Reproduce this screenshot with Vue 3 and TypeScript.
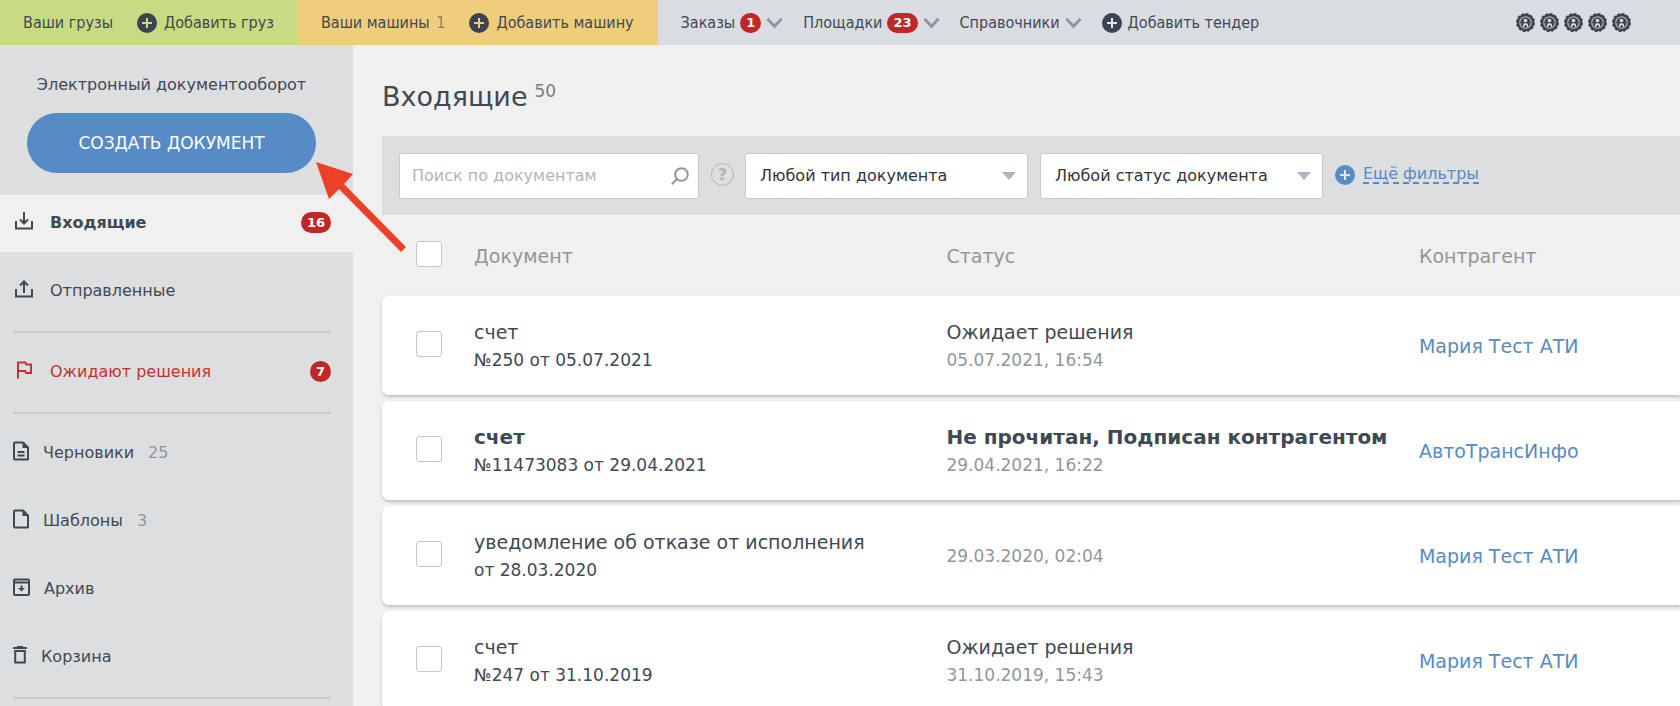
<script setup lang="ts">
import { ref } from 'vue'

interface NavItem {
  label: string
  icon: 'inbox' | 'outbox' | 'flag' | 'draft' | 'template' | 'archive' | 'trash'
  badge?: number
  count?: number
  wide?: boolean
  active?: boolean
  alert?: boolean
}

interface DocRow {
  id: number
  title: string
  details: string
  status?: string
  date: string
  partner: string
  unread?: boolean
}

const navGroups: NavItem[][] = [
  [
    { label: 'Входящие', icon: 'inbox', badge: 16, wide: true, active: true },
    { label: 'Отправленные', icon: 'outbox', wide: true },
  ],
  [{ label: 'Ожидают решения', icon: 'flag', badge: 7, wide: true, alert: true }],
  [
    { label: 'Черновики', icon: 'draft', count: 25 },
    { label: 'Шаблоны', icon: 'template', count: 3 },
    { label: 'Архив', icon: 'archive' },
    { label: 'Корзина', icon: 'trash' },
  ],
]

const menus: { label: string; badge?: number }[] = [
  { label: 'Заказы', badge: 1 },
  { label: 'Площадки', badge: 23 },
  { label: 'Справочники' },
]

const rows: DocRow[] = [
  { id: 1, title: 'счет', details: '№250 от 05.07.2021', status: 'Ожидает решения', date: '05.07.2021, 16:54', partner: 'Мария Тест АТИ' },
  { id: 2, title: 'счет', details: '№11473083 от 29.04.2021', status: 'Не прочитан, Подписан контрагентом', date: '29.04.2021, 16:22', partner: 'АвтоТрансИнфо', unread: true },
  { id: 3, title: 'уведомление об отказе от исполнения', details: 'от 28.03.2020', date: '29.03.2020, 02:04', partner: 'Мария Тест АТИ' },
  { id: 4, title: 'счет', details: '№247 от 31.10.2019', status: 'Ожидает решения', date: '31.10.2019, 15:43', partner: 'Мария Тест АТИ' },
]

const query = ref('')
const selected = ref<number[]>([])

function toggleAll(event: Event) {
  selected.value = (event.target as HTMLInputElement).checked ? rows.map((r) => r.id) : []
}
</script>

<template>
  <div class="page">
    <header class="topbar">
      <nav class="segment cargo">
        <a href="#">Ваши грузы</a>
        <a href="#" class="add">
          <svg class="plus" viewBox="0 0 20 20"><circle cx="10" cy="10" r="10" /><path d="M10 5v10M5 10h10" /></svg>
          Добавить груз
        </a>
      </nav>
      <nav class="segment trucks">
        <a href="#">Ваши машины <span class="muted">1</span></a>
        <a href="#" class="add">
          <svg class="plus" viewBox="0 0 20 20"><circle cx="10" cy="10" r="10" /><path d="M10 5v10M5 10h10" /></svg>
          Добавить машину
        </a>
      </nav>
      <nav class="segment tools">
        <button v-for="menu in menus" :key="menu.label" type="button" class="menu">
          {{ menu.label }}
          <span v-if="menu.badge" class="badge">{{ menu.badge }}</span>
          <svg class="chevron" viewBox="0 0 18 12"><path d="M1.5 1.5 9 9.5 16.5 1.5" /></svg>
        </button>
        <a href="#" class="add">
          <svg class="plus" viewBox="0 0 20 20"><circle cx="10" cy="10" r="10" /><path d="M10 5v10M5 10h10" /></svg>
          Добавить тендер
        </a>
        <div class="medals">
          <svg v-for="n in 5" :key="n" viewBox="0 0 20 20">
            <circle class="teeth" cx="10" cy="10" r="9" />
            <circle class="disc" cx="10" cy="10" r="9.2" />
            <circle class="ring" cx="10" cy="10" r="6" />
            <circle class="face" cx="10" cy="8" r="1.9" />
            <path class="face" d="M7.4 14.8v-2.5q0-1.5 2.6-1.5t2.6 1.5v2.5h-1.4V13H8.8v1.8z" />
          </svg>
        </div>
      </nav>
    </header>

    <div class="body">
      <aside class="sidebar">
        <div class="sidebar-head">
          <div class="product">Электронный документооборот</div>
          <button type="button" class="create">СОЗДАТЬ ДОКУМЕНТ</button>
        </div>
        <nav class="nav">
          <template v-for="(group, g) in navGroups" :key="g">
            <a
              v-for="item in group"
              :key="item.label"
              href="#"
              class="nav-item"
              :class="{ wide: item.wide, active: item.active, alert: item.alert }"
            >
              <svg v-if="item.icon === 'inbox'" class="ico" width="18" height="18" viewBox="0 0 18 18">
                <path d="M1 9v7.5h16V9M9 0v11M5 7.5l4 4 4-4" />
              </svg>
              <svg v-else-if="item.icon === 'outbox'" class="ico" width="18" height="18" viewBox="0 0 18 18">
                <path d="M1 9v7.5h16V9M9 13V2M5 5.5l4-4 4 4" />
              </svg>
              <svg v-else-if="item.icon === 'flag'" class="ico" width="18" height="18" viewBox="0 0 18 18">
                <path d="M3 17.5V1.5h7.5l.7 2H16V12h-5l-.7-2H3" />
              </svg>
              <svg v-else-if="item.icon === 'draft'" class="ico" width="16" height="20" viewBox="0 0 16 20">
                <path d="M2 1.5h8l5 5V18a.5.5 0 0 1-.5.5H2a1 1 0 0 1-1-1v-15a1 1 0 0 1 1-1zM4.500 11h7M4.500 14.500h7" />
                <path class="solid" d="M9.5 1.5V7H15z" />
              </svg>
              <svg v-else-if="item.icon === 'template'" class="ico" width="16" height="20" viewBox="0 0 16 20">
                <path d="M2 1.5h8l5 5V18a.5.5 0 0 1-.5.5H2a1 1 0 0 1-1-1v-15a1 1 0 0 1 1-1z" />
                <path class="solid" d="M9.5 1.5V7H15z" />
              </svg>
              <svg v-else-if="item.icon === 'archive'" class="ico" width="17" height="18" viewBox="0 0 17 18">
                <path d="M1 4.5v-2a1 1 0 0 1 1-1h13a1 1 0 0 1 1 1V16a1 1 0 0 1-1 1H2a1 1 0 0 1-1-1zM1 4.500h15M8.500 7.500V11" />
                <path class="solid" d="M5 10h7l-3.5 3.5z" />
              </svg>
              <svg v-else class="ico" width="14" height="18" viewBox="0 0 14 18">
                <path d="M0 2h14M4 1h6M2.2 5h9.600v11.500H2.200z" />
              </svg>
              <span>{{ item.label }}</span>
              <span v-if="item.count" class="count">{{ item.count }}</span>
              <span v-if="item.badge" class="badge">{{ item.badge }}</span>
            </a>
            <hr class="divider" />
          </template>
        </nav>
      </aside>

      <main class="main">
        <h1 class="title">Входящие <sup>50</sup></h1>

        <form class="filters" @submit.prevent>
          <div class="search">
            <input v-model="query" type="text" placeholder="Поиск по документам" aria-label="Поиск по документам" />
            <button type="submit" aria-label="Найти">
              <svg viewBox="0 0 18 18"><circle cx="10.5" cy="7.5" r="6.3" /><path d="M6 12 .8 17.2" /></svg>
            </button>
          </div>
          <button type="button" class="help" aria-label="Справка">?</button>
          <div class="select">
            <select aria-label="Тип документа">
              <option>Любой тип документа</option>
            </select>
            <svg viewBox="0 0 14 8"><path d="M0 0h14L7 8z" /></svg>
          </div>
          <div class="select">
            <select aria-label="Статус документа">
              <option>Любой статус документа</option>
            </select>
            <svg viewBox="0 0 14 8"><path d="M0 0h14L7 8z" /></svg>
          </div>
          <button type="button" class="more">
            <svg class="plus" viewBox="0 0 20 20"><circle cx="10" cy="10" r="10" /><path d="M10 5v10M5 10h10" /></svg>
            <span>Ещё фильтры</span>
          </button>
        </form>

        <table class="docs">
          <colgroup>
            <col class="c-check" />
            <col class="c-doc" />
            <col class="c-status" />
            <col />
          </colgroup>
          <thead>
            <tr>
              <th class="check"><input type="checkbox" aria-label="Выбрать все" @change="toggleAll" /></th>
              <th>Документ</th>
              <th>Статус</th>
              <th>Контрагент</th>
            </tr>
          </thead>
          <tbody>
            <tr v-for="row in rows" :key="row.id" :class="{ unread: row.unread }">
              <td class="check"><input v-model="selected" type="checkbox" :value="row.id" :aria-label="row.details" /></td>
              <td>
                <div class="primary">{{ row.title }}</div>
                <div class="secondary">{{ row.details }}</div>
              </td>
              <td>
                <div v-if="row.status" class="primary">{{ row.status }}</div>
                <div class="secondary date">{{ row.date }}</div>
              </td>
              <td><a href="#" class="partner">{{ row.partner }}</a></td>
            </tr>
          </tbody>
        </table>
      </main>
    </div>

    <svg class="pointer" viewBox="0 0 90 90"><path d="M0 0 37 12 28 22 90 85 85 90 23 27 13 37z" /></svg>
  </div>
</template>

<style>
body {
  margin: 0;
}
</style>

<style scoped>
.page {
  position: relative;
  display: flex;
  flex-direction: column;
  height: 100vh;
  overflow: hidden;
  background: #f0f0f0;
  color: #3f4954;
  font-family: "DejaVu Sans", Verdana, sans-serif;
  font-size: 16px;
}
a {
  color: inherit;
  text-decoration: none;
}
button {
  padding: 0;
  border: 0;
  background: none;
  color: inherit;
  font: inherit;
  cursor: pointer;
}
svg {
  flex: none;
}

.topbar {
  display: flex;
  flex: none;
  height: 45px;
  font-family: "DejaVu Sans Condensed", "DejaVu Sans", Tahoma, sans-serif;
  white-space: nowrap;
}
.segment {
  display: flex;
  align-items: center;
  gap: 24px;
  padding: 0 24px 0 23px;
}
.cargo {
  background: #c8da82;
}
.trucks {
  background: #efcd7c;
}
.tools {
  flex: 1;
  gap: 20px;
  background: #d9dce1;
}
.muted {
  margin-left: 2px;
  color: #3f495499;
}
.add {
  display: flex;
  align-items: center;
  gap: 6px;
}
.plus {
  width: 20px;
  height: 20px;
}
.plus circle {
  fill: #3b4450;
}
.plus path {
  fill: none;
  stroke: #e4e6ea;
  stroke-width: 2;
}
.cargo .plus path {
  stroke: #c8da82;
}
.trucks .plus path {
  stroke: #efcd7c;
}
.cargo .plus,
.trucks .plus {
  margin-right: 1px;
}
.menu {
  display: flex;
  align-items: center;
  gap: 5px;
}
.chevron {
  width: 17px;
  height: 12px;
  fill: none;
  stroke: #8f979d;
  stroke-width: 3;
}
.badge {
  box-sizing: border-box;
  min-width: 20px;
  padding: 0 6px;
  border-radius: 10px;
  background: #c12728;
  color: #fff;
  font-family: "DejaVu Sans", Verdana, sans-serif;
  font-size: 13px;
  font-weight: bold;
  line-height: 20px;
  text-align: center;
}
.medals {
  display: flex;
  gap: 5px;
  margin: 0 25px 0 auto;
}
.medals svg {
  width: 19px;
  height: 19px;
}
.teeth {
  fill: none;
  stroke: #3b4450;
  stroke-width: 2;
  stroke-dasharray: 2.9 1.81;
}
.disc {
  fill: #3b4450;
}
.ring {
  fill: none;
  stroke: #b9bec5;
  stroke-width: 1.2;
}
.face {
  fill: #d9dce1;
}

.body {
  display: flex;
  flex: 1;
  min-height: 0;
}
.sidebar {
  flex: none;
  width: 353px;
  overflow: hidden;
  background: #dddee0;
}
.sidebar-head {
  padding: 28px 37px 22px 27px;
}
.product {
  margin-bottom: 16px;
  line-height: 24px;
  text-align: center;
}
.create {
  width: 100%;
  height: 60px;
  border-radius: 30px;
  background: #568bc5;
  color: #fff;
  font-size: 17px;
}
.nav {
  display: flex;
  flex-direction: column;
  gap: 11px;
}
.nav-item {
  box-sizing: border-box;
  display: flex;
  align-items: center;
  gap: 14px;
  height: 57px;
  padding: 0 22px 2px 13px;
}
.nav-item.wide {
  gap: 17px;
  padding-left: 15px;
}
.nav-item.active {
  background: #f0f0f0;
  font-weight: bold;
}
.nav-item.alert {
  color: #c9302f;
}
.ico {
  margin-bottom: 3px;
  fill: none;
  stroke: currentColor;
  stroke-width: 2;
}
.ico .solid {
  fill: currentColor;
  stroke: none;
}
.count {
  color: #8f979d;
}
.nav-item .badge {
  margin-left: auto;
  border-radius: 11px;
  line-height: 21px;
}
.divider {
  width: calc(100% - 35px);
  height: 2px;
  margin: 0 22px 0 13px;
  border: 0;
  background: #c9ccd3;
}

.main {
  flex: 1;
  min-width: 0;
  padding: 29px 0 0 29px;
}
.title {
  display: flex;
  gap: 7px;
  margin: 0 0 16px;
  font-size: 27px;
  font-weight: normal;
  line-height: 46px;
}
.title sup {
  color: #76808a;
  font-size: 17px;
  line-height: 34px;
}
.filters {
  display: flex;
  align-items: center;
  height: 79px;
  padding: 0 17px;
  background: #dddee0;
}
.search {
  box-sizing: border-box;
  display: flex;
  align-items: center;
  width: 300px;
  height: 46px;
  padding: 0 9px 0 12px;
  border: 1px solid #c9cacc;
  border-radius: 3px;
  background: #fff;
}
.search input {
  flex: 1;
  min-width: 0;
  padding: 0;
  border: 0;
  outline: 0;
  background: none;
  color: #333;
  font: inherit;
}
.search input::placeholder {
  color: #b4b5b7;
}
.search button,
.search svg {
  display: block;
  width: 18px;
  height: 18px;
}
.search svg {
  fill: none;
  stroke: #8f979d;
  stroke-width: 2;
}
.help {
  box-sizing: border-box;
  width: 23px;
  height: 23px;
  margin: 0 11px 2px 12px;
  border: 1px solid #b1b3b5;
  border-radius: 50%;
  color: #b1b3b5;
  font-size: 16px;
  font-weight: bold;
  line-height: 21px;
}
.select {
  display: grid;
  align-items: center;
  width: 283px;
  margin-right: 12px;
}
.select select {
  grid-area: 1 / 1;
  box-sizing: border-box;
  width: 100%;
  height: 46px;
  padding: 0 30px 0 14px;
  border: 1px solid #c9cacc;
  border-radius: 3px;
  background: #fff;
  color: #333;
  font: inherit;
  appearance: none;
}
.select svg {
  grid-area: 1 / 1;
  justify-self: end;
  width: 14px;
  height: 8px;
  margin-right: 12px;
  fill: #adb6be;
  pointer-events: none;
}
.more {
  display: flex;
  align-items: center;
  gap: 8px;
  margin-bottom: 2px;
  color: #568bc5;
}
.more span {
  border-bottom: 2px dashed #568bc5;
  line-height: 17px;
}
.more .plus circle {
  fill: #568bc5;
}

.docs {
  width: 100%;
  table-layout: fixed;
  border-spacing: 0 6px;
}
.c-check {
  width: 92px;
}
.c-doc,
.c-status {
  width: 36.4%;
}
th,
td {
  padding: 0;
  text-align: left;
  vertical-align: middle;
  font-size: 19px;
}
th {
  height: 69px;
  color: #8f979d;
  font-weight: normal;
}
td {
  height: 99px;
  background: #fff;
}
tbody tr {
  border-radius: 7px 0 0 7px;
  box-shadow: 0 2px 3px #00000033;
}
td:first-child {
  border-radius: 7px 0 0 7px;
}
.check {
  padding-left: 34px;
}
.check input {
  display: block;
  box-sizing: border-box;
  width: 26px;
  height: 26px;
  margin: 0 0 3px;
  border: 1px solid #c4c6c8;
  border-radius: 3px;
  background: #fff;
  appearance: none;
}
.check input:checked {
  background: #568bc5;
}
.primary {
  line-height: 28px;
}
.secondary {
  font-size: 17px;
  line-height: 28px;
}
.unread .primary {
  font-size: 20px;
  font-weight: bold;
}
.date {
  color: #8f979d;
}
.partner {
  color: #568bc5;
}

.pointer {
  position: absolute;
  top: 162px;
  left: 316px;
  width: 90px;
  height: 90px;
  fill: #ed4127;
  pointer-events: none;
}
</style>
